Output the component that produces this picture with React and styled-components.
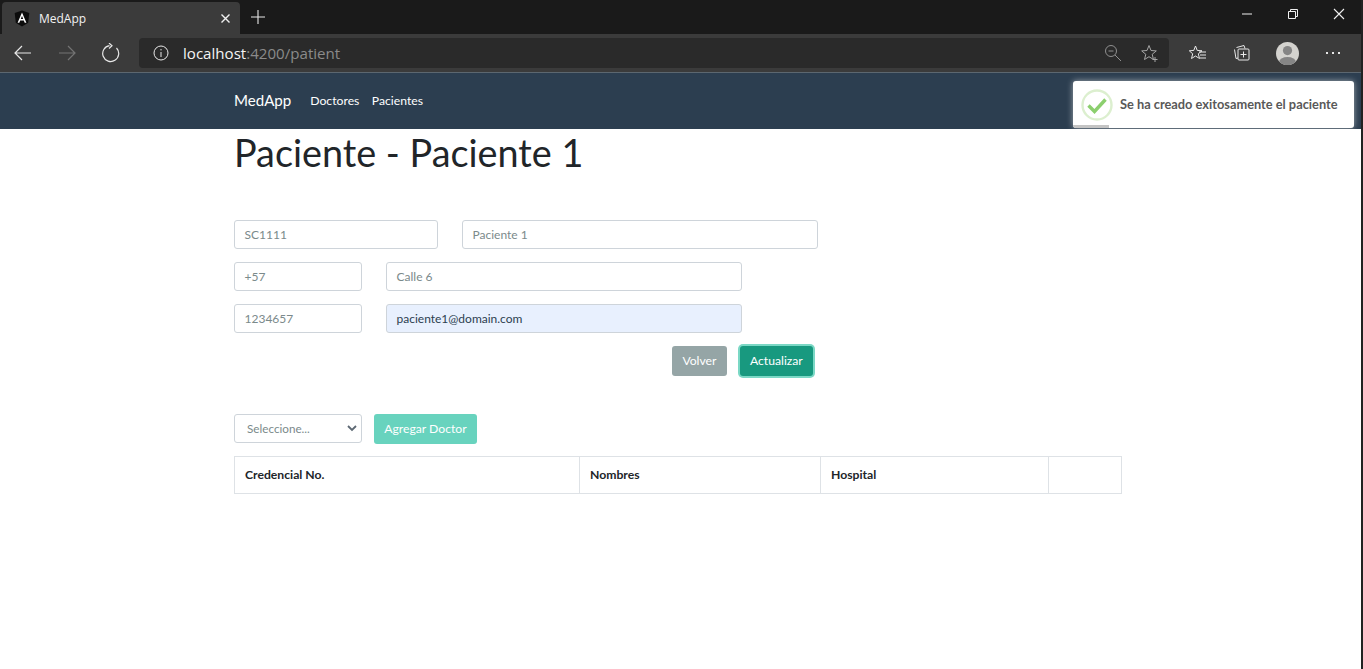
import React from 'react';
import styled, { createGlobalStyle } from 'styled-components';

const Global = createGlobalStyle`
  html, body { margin: 0; padding: 0; background: #fff; height: 100%; overflow: hidden; }
  body { font-family: Lato, "Liberation Sans", sans-serif; }
  * { box-sizing: border-box; }
`;
const Page = styled.div`position: relative; width: 1363px; height: 669px; overflow: hidden; background: #fff; border-right: 2px solid #222;`;
const TabStrip = styled.div`height: 34px; background: #1a1a1a; display: flex; align-items: flex-end; padding-left: 2px; position: relative;`;
const Tab = styled.div`width: 238px; height: 32px; background: #3b3b3b; border-radius: 4px 4px 0 0; display: flex; align-items: center; padding: 0 9px 0 12px; color: #f2f2f2; font: 12px "Open Sans", sans-serif;`;
const TabTitle = styled.span`margin-left: 9px; flex: 1;`;
const NewTab = styled.div`margin: 0 0 6px 11px; height: 22px; display: flex; align-items: center;`;
const WindowButtons = styled.div`margin-left: auto; height: 34px; display: flex; align-items: center; padding-bottom: 6px; margin-right: -1px;`;
const WindowButton = styled.div`width: 46px; height: 28px; display: flex; align-items: center; justify-content: center;`;
const Toolbar = styled.div`height: 38px; background: #3b3b3b; display: flex; align-items: center; padding: 0 0 0 13px;`;
const NavIcons = styled.div`width: 126px; display: flex; gap: 24px; align-items: center;`;
const Omni = styled.div`width: 1030px; height: 30px; background: #2a2a2a; border-radius: 4px; display: flex; align-items: center; padding: 0 10px 0 14px;`;
const Url = styled.span`margin-left: 14px; font: 15.1px "Open Sans", sans-serif; color: #f4f4f4; flex: 1;`;
const UrlDim = styled.span`color: #8b8b8b;`;
const OmniIcons = styled.div`display: flex; gap: 19px; align-items: center;`;
const ToolIcons = styled.div`display: flex; align-items: center; margin-left: 20px; gap: 26px;`;
const Avatar = styled.div`width: 23px; height: 23px; border-radius: 50%; overflow: hidden; margin-left: -1px;`;
const Dots = styled.div`display: flex; gap: 4px; margin-left: 1px;`;
const Dot = styled.i`width: 2px; height: 2px; background: #e6e6e6; display: block;`;
const Navbar = styled.nav`height: 57px; background: #2c3e50; border-top: 1px solid #5c6770; padding: 0 0 2px 234px; display: flex; align-items: center; color: #fff;`;
const Brand = styled.span`font-size: 15.1px; margin-right: 19px;`;
const NavLink = styled.span`font-size: 12.2px; margin-right: 12.5px;`;
const Content = styled.main`padding-left: 234px; width: 1122px;`;
const Title = styled.h1`margin: 0; height: 91px; font-size: 37.8px; font-weight: 400; color: #212529; line-height: 47px;`;
const FormRow = styled.div`display: flex; gap: 24px; margin-bottom: 13px;`;
const Input = styled.div`
  width: ${p => p.$w}px; height: 29px; border: 1px solid #ced4da; border-radius: 3px; padding: 0 10px 0 9.5px;
  display: flex; align-items: center; font-size: 12px; color: ${p => p.$filled ? '#2c3e50' : '#7b8a8b'}; background: ${p => p.$filled ? '#e8f0fe' : '#fff'};
`;
const Actions = styled.div`display: flex; justify-content: flex-end; width: 579px; gap: 13px; margin-bottom: 38px;`;
const Button = styled.button`
  height: 30px; border: 0; border-radius: 3px; padding: 0 10.2px 1px; font: 12.2px Lato, sans-serif; color: #fff;
  background: ${p => p.$bg};
  ${p => p.$focus ? 'box-shadow: 0 0 0 2px #7bd8c5;' : ''}
  ${p => p.$faded ? 'opacity: .65;' : ''}
`;
const Picker = styled.div`display: flex; gap: 12px; margin-bottom: 12px;`;
const Select = styled.div`width: 128px; height: 29px; border: 1px solid #ced4da; border-radius: 3px; padding: 0 4px 1px 12px; display: flex; align-items: center; justify-content: space-between; font-size: 11.7px; color: #7b8a8b;`;
const Table = styled.div`display: grid; grid-template-columns: 344px 241px 228px 75px; width: 888px; height: 38px; border: 1px solid #dee2e6;`;
const Th = styled.div`display: flex; align-items: center; padding: 0 0 2px 10px; font-size: 12.2px; font-weight: 700; color: #212529; & + & { border-left: 1px solid #dee2e6; }`;
const Toast = styled.div`position: absolute; left: 1073px; top: 81px; width: 281px; height: 47px; background: #fff; border-radius: 3px; box-shadow: 0 0 6px rgba(255,255,255,.55); display: flex; align-items: center; padding: 0 0 0 8px; overflow: hidden;`;
const ToastText = styled.span`margin: 0 0 2px 7px; font-size: 12.8px; font-weight: 700; color: #595959;`;
const Progress = styled.div`position: absolute; left: 0; bottom: 0; width: 36px; height: 3px; background: #c4c4c4;`;

const Ico = ({ w = 20, h = 20, children, stroke = '#e8e8e8', sw = 1.2 }) => (
  <svg width={w} height={h} viewBox={`0 0 ${w} ${h}`} fill="none" stroke={stroke} strokeWidth={sw}>{children}</svg>
);

export default function App() {
  return (
    <Page>
      <Global />
      <TabStrip>
        <Tab>
          <svg width="16" height="17" viewBox="0 0 16 17">
            <path d="M8 0.5 15.3 3.1 14.2 12.8 8 16.5 1.8 12.8 .7 3.1Z" fill="#0c0c0c" />
            <path d="M8 2.5 3.6 12.7H5.3L6.2 10.4H9.8L10.7 12.7H12.4ZM6.8 8.9 8 6 9.2 8.9Z" fill="#fff" fillRule="evenodd" />
          </svg>
          <TabTitle>MedApp</TabTitle>
          <Ico w={11} h={11} stroke="#f0f0f0" sw={1.4}><path d="M1.5 1.5 9.5 9.5M9.5 1.5 1.5 9.5" /></Ico>
        </Tab>
        <NewTab>
          <Ico w={14} h={14} stroke="#e8e8e8" sw={1.1}><path d="M7 0V14M0 7H14" /></Ico>
        </NewTab>
        <WindowButtons>
          <WindowButton><Ico w={10} h={2} stroke="#f0f0f0" sw={1}><path d="M0 1H10" /></Ico></WindowButton>
          <WindowButton><Ico w={10} h={10} stroke="#f0f0f0" sw={1}><path d="M.5 2.5H7.5V9.5H.5ZM2.5 2.5V.5H9.5V7.5H7.5" /></Ico></WindowButton>
          <WindowButton><Ico w={12} h={12} stroke="#f0f0f0" sw={1.1}><path d="M1 1 11 11M11 1 1 11" /></Ico></WindowButton>
        </WindowButtons>
      </TabStrip>
      <Toolbar>
        <NavIcons>
          <Ico w={20} h={18}><path d="M2 9H18M9 2 2 9 9 16" /></Ico>
          <Ico w={20} h={18} stroke="#747474"><path d="M2 9H18M11 2 18 9 11 16" /></Ico>
          <Ico w={20} h={20}><path d="M15.5 5A8 8 0 1 1 8.5 2.6M8 0 11 2.8 8 5.5" /></Ico>
        </NavIcons>
        <Omni>
          <Ico w={16} h={16} sw={1}><circle cx="8" cy="8" r="7" /><path d="M8 7V12M8 4V5.4" /></Ico>
          <Url>localhost<UrlDim>:4200/patient</UrlDim></Url>
          <OmniIcons>
            <Ico w={18} h={18} stroke="#8f8f8f" sw={1}><circle cx="7" cy="7" r="5.5" /><path d="M4.5 7H9.5M11 11 17 17" /></Ico>
            <Ico w={18} h={18} stroke="#a5a5a5" sw={1}><path d="M8 1.5 10 6.5 15.3 6.9 11.2 10.3 12.5 15.5 8 12.7 3.5 15.5 4.8 10.3.7 6.9 6 6.5Z" /><path d="M14 13V18M11.5 15.5H16.5" /></Ico>
          </OmniIcons>
        </Omni>
        <ToolIcons>
          <Ico w={18} h={18} sw={1}><path d="M6.5 2 8.2 6.4 13 6.8 9.3 9.8 10.5 14.5 6.5 12 2.5 14.5 3.7 9.8 0.3 6.8 4.8 6.4Z" /><path d="M10 8H17M11 11H17M11 14H17" /></Ico>
          <Ico w={18} h={18} sw={1}><path d="M3.5 3.5 11 1.5 12 4.5M1.5 5.5 3 14.5 5 14" /><rect x="5" y="5" width="11" height="11" rx="1" /><path d="M10.5 7.5V13.5M7.5 10.5H13.5" /></Ico>
          <Avatar>
            <svg width="23" height="23" viewBox="0 0 23 23"><rect width="23" height="23" fill="#d4d3cf" /><circle cx="11.5" cy="8.6" r="4.6" fill="#858585" /><ellipse cx="11.5" cy="20" rx="8.4" ry="5" fill="#858585" /></svg>
          </Avatar>
          <Dots><Dot /><Dot /><Dot /></Dots>
        </ToolIcons>
      </Toolbar>
      <Navbar>
        <Brand>MedApp</Brand>
        <NavLink>Doctores</NavLink>
        <NavLink>Pacientes</NavLink>
      </Navbar>
      <Content>
        <Title>Paciente - Paciente 1</Title>
        <FormRow>
          <Input $w={204}>SC1111</Input>
          <Input $w={356}>Paciente 1</Input>
        </FormRow>
        <FormRow>
          <Input $w={128}>+57</Input>
          <Input $w={356}>Calle 6</Input>
        </FormRow>
        <FormRow>
          <Input $w={128}>1234657</Input>
          <Input $w={356} $filled>paciente1@domain.com</Input>
        </FormRow>
        <Actions>
          <Button $bg="#95a5a6">Volver</Button>
          <Button $bg="#18997f" $focus>Actualizar</Button>
        </Actions>
        <Picker>
          <Select>Seleccione...
            <Ico w={10} h={7} stroke="#5d6873" sw={1.8}><path d="M1 1 5 5 9 1" /></Ico>
          </Select>
          <Button $bg="#18bc9c" $faded>Agregar Doctor</Button>
        </Picker>
        <Table>
          <Th>Credencial No.</Th>
          <Th>Nombres</Th>
          <Th>Hospital</Th>
          <Th />
        </Table>
      </Content>
      <Toast>
        <svg width="32" height="32" viewBox="0 0 32 32" fill="none">
          <circle cx="16" cy="16" r="14.5" stroke="#dcefcf" strokeWidth="2.4" />
          <path d="M7.5 16.5 13.5 22.5 24.5 10.5" stroke="#8ccf6e" strokeWidth="3.4" />
        </svg>
        <ToastText>Se ha creado exitosamente el paciente</ToastText>
        <Progress />
      </Toast>
    </Page>
  );
}
